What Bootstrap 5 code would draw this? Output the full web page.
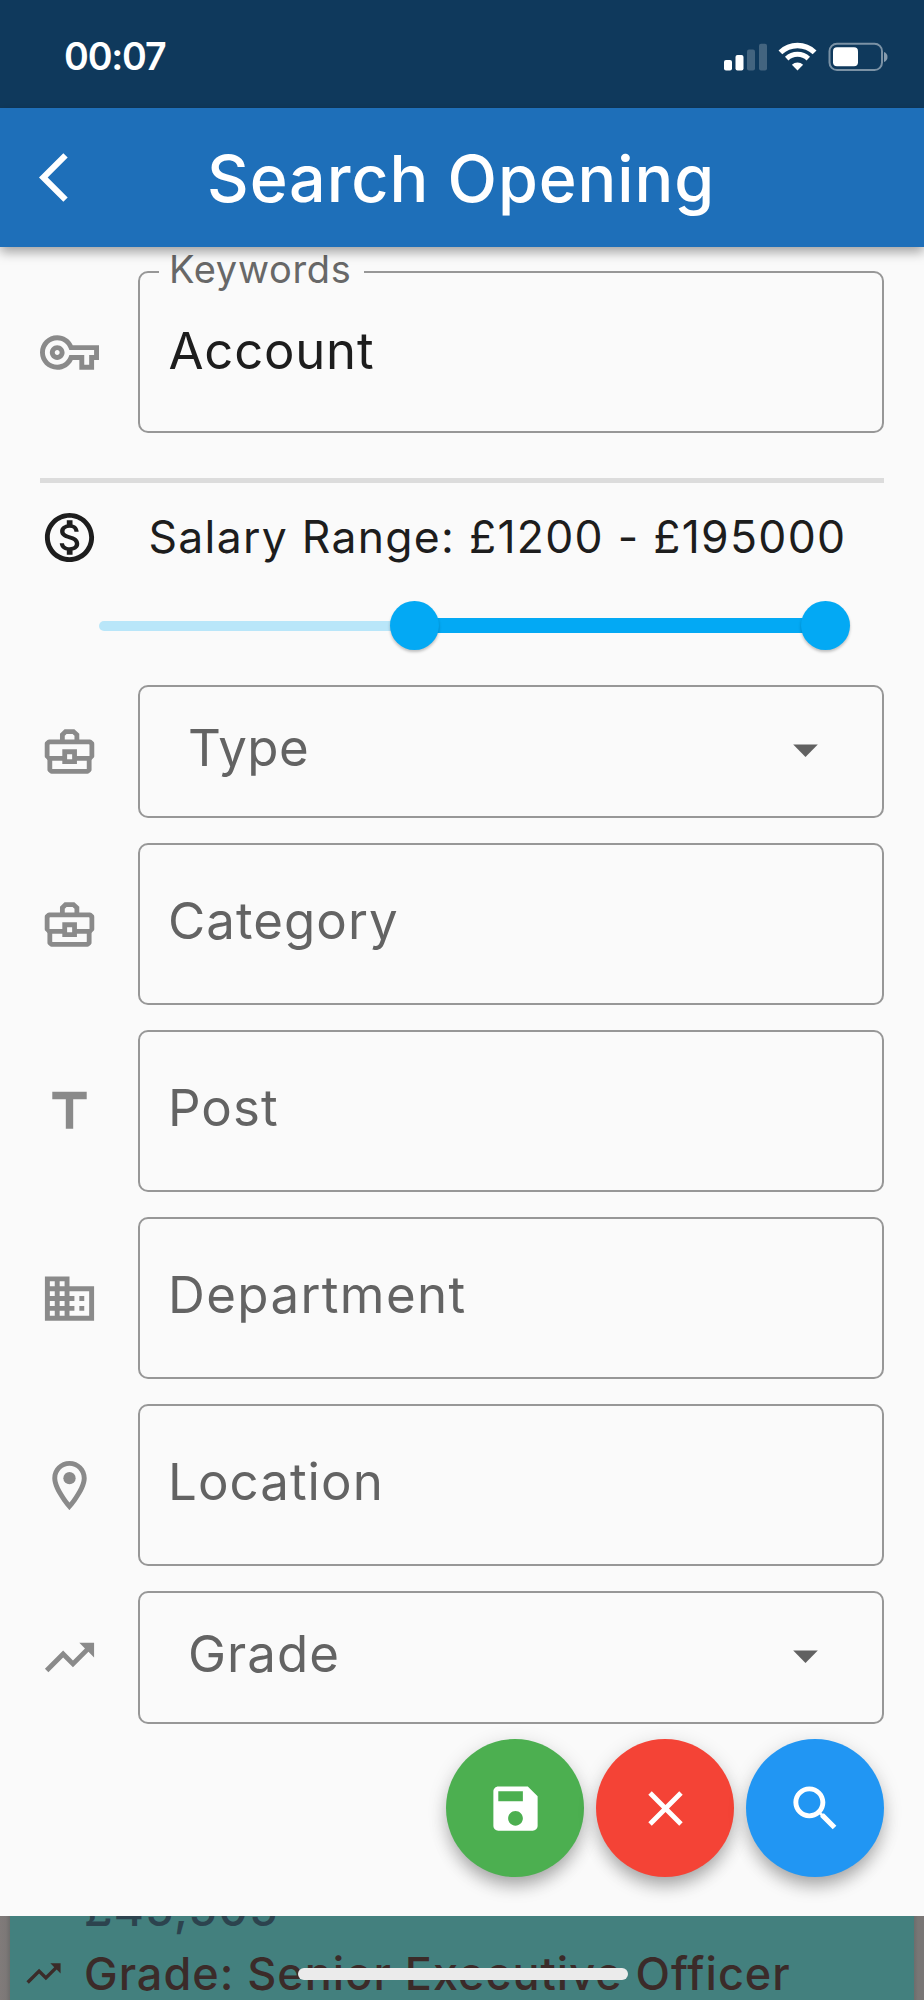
<!DOCTYPE html>
<html lang="en">
<head>
<meta charset="utf-8">
<meta name="viewport" content="width=device-width, initial-scale=1">
<title>Search Opening</title>
<link href="https://cdn.jsdelivr.net/npm/bootstrap@5.3.0/dist/css/bootstrap.min.css" rel="stylesheet">
<style>
  html, body { height: 2000px; overflow: hidden; }
  body { font-family: Inter, "Liberation Sans", sans-serif; background: #7b7776; color: #1d1d1d; line-height: 1.2; }
  svg { display: block; flex: none; }
  .ico { width: 59px; height: 59px; fill: #8a8a8a; }

  .status-bar { height: 108px; background: #0f395c; padding: 6px 35px 0 64px; }
  .clock { font-size: 37.6px; font-weight: 600; letter-spacing: -1.15px; }
  .app-bar { height: 138.5px; background: #1e6fb9; box-shadow: 0 5px 11px rgba(0,0,0,.36); padding-left: 39px; z-index: 2; }
  .app-bar h1 { font-size: 64.5px; font-weight: 500; letter-spacing: .96px; margin: 4px 0 0 109px; white-space: nowrap; line-height: 78px; }

  .sheet { background: #fafafa; height: 1669px; padding: 24.5px 40px 0 39.5px; }
  .field { gap: 39.5px; margin-bottom: 25px; }
  .box { height: 162px; border: 2px solid #979797; border-radius: 10px; padding: 0 29px 7px 28px; font-size: 51px; letter-spacing: 1.05px; color: #636363; }
  .box.pick { height: 133px; padding-left: 48px; padding-right: 47px; }
  .box.filled { color: #1d1d1d; font-size: 50.8px; letter-spacing: .8px; padding: 0 29px 1px 28.5px; }
  .box .ico { fill: #616161; margin-top: 3px; }
  .ls-tight { letter-spacing: .45px; }
  .ls-wide { letter-spacing: 1.38px; }
  .float-label { left: 19px; top: -27px; height: 46px; line-height: 46px; padding: 0 12px 0 10px; width: 205px; background: #fafafa; font-size: 38px; letter-spacing: .7px; color: #686868; }

  .rule { height: 5px; background: #dcdcdc; margin-top: 45px; }
  .salary { height: 108px; gap: 50px; font-size: 44.5px; letter-spacing: 1.28px; white-space: nowrap; }
  .salary span { padding-top: 2px; }
  .salary .ico { fill: #1d1d1d; }
  .slider { height: 69px; margin: 0 35px 25px 59px; }
  .track { height: 10px; background: #b9e6f9; border-radius: 5px 0 0 5px; width: 316px; }
  .track-on { height: 14.5px; background: #03a9f4; width: 410.5px; }
  .thumb { width: 49px; height: 49px; border-radius: 50%; background: #03a9f4; box-shadow: 0 2px 3px rgba(0,0,0,.24); margin: 0 -24.5px; z-index: 1; flex: none; }

  .fabs { gap: 12.1px; margin: -10px -.4px 0 0; }
  .fab { width: 138px; height: 138px; border: 0; border-radius: 50%; box-shadow: 0 12px 18px -4px rgba(0,0,0,.28), 0 4px 20px rgba(0,0,0,.14); }
  .fab .ico { fill: #fff; }
  .fab-save { background: #4caf50; }
  .fab-clear { background: #f44336; }
  .fab-find { background: #2196f3; }

  .behind { height: 84.5px; padding: 0 10px; background: linear-gradient(90deg, #807b7a 0, #7c7877 6px, #6d6d6c 10px, #6d6d6c 914px, #787675 918px, #797675 100%); }
  .result { background: #43807e; height: 100%; padding-left: 13px; color: #3b2b29; }
  .pay { height: 20px; padding-left: 61px; font-size: 46px; font-weight: 500; letter-spacing: 1.3px; color: #2c434e; }
  .pay span { line-height: 54px; }
  .grade { gap: 20px; font-size: 45px; font-weight: 500; letter-spacing: 1px; line-height: 54px; margin-top: 11px; white-space: nowrap; }
  .grade svg { width: 41px; height: 41px; fill: #3b2b29; }
  .home-bar { left: 297.5px; bottom: 20px; width: 330px; height: 12.5px; border-radius: 7px; background: #ebebeb; }
</style>
<script src="https://cdn.jsdelivr.net/npm/bootstrap@5.3.0/dist/js/bootstrap.bundle.min.js"></script>
</head>
<body>
<svg width="0" height="0" class="position-absolute" aria-hidden="true">
  <symbol id="i-case" viewBox="0 0 24 24">
    <g fill="none" stroke="#8a8a8a" stroke-width="1.95">
      <path d="M9.1 8V5.2l1.3-1.3h3.2l1.4 1.3V8"/>
      <path d="M10 14.8H3.8l-.9-.9V8.8l.8-.7h16.6l.8.7v5.1l-.9.9H14" stroke-linejoin="round"/>
      <path d="M4 15v4.4l.7.7h14.6l.7-.7V15" stroke-linejoin="round"/>
      <path d="M10.05 12.1h4v4h-4z"/>
    </g>
  </symbol>
  <symbol id="i-trend" viewBox="0 0 24 24"><path d="M16 6l2.29 2.29-4.88 4.88-4-4L2 16.59 3.41 18l6-6 4 4 6.3-6.29L22 12V6z"/></symbol>
  <symbol id="i-drop" viewBox="0 0 24 24"><path d="M7 10l5 5 5-5z"/></symbol>
</svg>

<div class="status-bar d-flex justify-content-between align-items-center text-white">
  <span class="clock">00:07</span>
  <svg width="167" height="32" viewBox="0 0 167 32" fill="#fff">
    <rect x="2" y="19" width="8" height="10.5" rx="2"/>
    <rect x="13.5" y="14" width="8" height="15.5" rx="2"/>
    <rect x="25" y="8.5" width="8" height="21" rx="2" opacity=".22"/>
    <rect x="37" y="2.7" width="8" height="26.8" rx="2" opacity=".22"/>
    <g fill="none" stroke="#fff">
      <path d="M58.400 11.400a24.600 24.600 0 0 1 34.200 0" stroke-width="5.4"/>
      <path d="M64.700 17.600a15.800 15.800 0 0 1 21.600 0" stroke-width="5"/>
    </g>
    <path d="M75.500 29.500l-5.600-5.800a8.400 8.400 0 0 1 11.200 0z"/>
    <rect x="107.500" y="2.700" width="52.500" height="26.400" rx="7.500" fill="none" stroke="#fff" stroke-width="2" opacity=".45"/>
    <rect x="111" y="6.300" width="25" height="19" rx="4"/>
    <path d="M162 11c2.400.8 3.500 2.600 3.500 5s-1.100 4.200-3.500 5z" opacity=".5"/>
  </svg>
</div>

<header class="app-bar d-flex align-items-center text-white position-relative">
  <svg width="59" height="59" viewBox="0 0 24 24" fill="#fff"><path d="M11.670 3.870L9.900 2.100 0 12l9.900 9.900 1.770-1.770L3.540 12z"/></svg>
  <h1>Search Opening</h1>
</header>

<main class="sheet">
  <div class="field d-flex align-items-center mb-0">
    <svg class="ico" viewBox="0 0 24 24"><path d="M22 19h-6v-4h-2.680c-1.140 2.420-3.600 4-6.320 4-3.860 0-7-3.140-7-7s3.140-7 7-7c2.720 0 5.170 1.580 6.320 4H24v6h-2v4zm-4-2h2v-4h2v-2H11.940l-.23-.67C11.010 8.340 9.110 7 7 7c-2.760 0-5 2.240-5 5s2.240 5 5 5c2.110 0 4.010-1.340 4.710-3.330l.23-.67H18v4zM7 15c-1.650 0-3-1.350-3-3s1.350-3 3-3 3 1.350 3 3-1.350 3-3 3zm0-4c-.55 0-1 .45-1 1s.45 1 1 1 1-.45 1-1-.45-1-1-1z"/></svg>
    <div class="box filled flex-grow-1 d-flex align-items-center position-relative">
      <label class="float-label position-absolute">Keywords</label>
      <span>Account</span>
    </div>
  </div>

  <div class="rule"></div>
  <div class="salary d-flex align-items-center">
    <svg class="ico" viewBox="0 0 24 24"><path d="M12 2C6.480 2 2 6.480 2 12s4.480 10 10 10 10-4.480 10-10S17.520 2 12 2zm0 18c-4.410 0-8-3.590-8-8s3.590-8 8-8 8 3.590 8 8-3.590 8-8 8zm.31-8.860c-1.770-.45-2.340-.94-2.340-1.670 0-.84.79-1.430 2.100-1.430 1.380 0 1.900.66 1.940 1.640h1.710c-.05-1.340-.87-2.570-2.490-2.970V5H10.900v1.690c-1.510.32-2.720 1.300-2.720 2.810 0 1.790 1.490 2.690 3.660 3.210 1.950.46 2.340 1.150 2.340 1.870 0 .53-.39 1.390-2.100 1.390-1.600 0-2.230-.72-2.320-1.640H8.040c.1 1.700 1.360 2.660 2.860 2.970V19h2.340v-1.670c1.520-.29 2.720-1.160 2.730-2.770-.01-2.200-1.900-2.960-3.660-3.420z"/></svg>
    <span>Salary Range: £1200 - £195000</span>
  </div>
  <div class="slider d-flex align-items-center">
    <div class="track"></div>
    <div class="thumb"></div>
    <div class="track-on"></div>
    <div class="thumb"></div>
  </div>

  <div class="field d-flex align-items-center">
    <svg class="ico"><use href="#i-case"/></svg>
    <div class="box pick flex-grow-1 d-flex align-items-center justify-content-between"><span class="ls-tight">Type</span><svg class="ico"><use href="#i-drop"/></svg></div>
  </div>
  <div class="field d-flex align-items-center">
    <svg class="ico"><use href="#i-case"/></svg>
    <div class="box flex-grow-1 d-flex align-items-center">Category</div>
  </div>
  <div class="field d-flex align-items-center">
    <svg class="ico" viewBox="0 0 24 24"><path d="M5 4v3h5.500v12h3V7H19V4z"/></svg>
    <div class="box flex-grow-1 d-flex align-items-center">Post</div>
  </div>
  <div class="field d-flex align-items-center">
    <svg class="ico" viewBox="0 0 24 24"><path d="M12 7V3H2v18h20V7H12zM6 19H4v-2h2v2zm0-4H4v-2h2v2zm0-4H4V9h2v2zm0-4H4V5h2v2zm4 12H8v-2h2v2zm0-4H8v-2h2v2zm0-4H8V9h2v2zm0-4H8V5h2v2zm10 12h-8v-2h2v-2h-2v-2h2v-2h-2V9h8v10zm-2-8h-2v2h2v-2zm0 4h-2v2h2v-2z"/></svg>
    <div class="box flex-grow-1 d-flex align-items-center"><span class="ls-wide">Department</span></div>
  </div>
  <div class="field d-flex align-items-center">
    <svg class="ico" viewBox="0 0 24 24"><path d="M12 2C8.130 2 5 5.130 5 9c0 5.250 7 13 7 13s7-7.750 7-13c0-3.870-3.130-7-7-7zM7 9c0-2.760 2.240-5 5-5s5 2.240 5 5c0 2.880-2.880 7.190-5 9.880C9.920 16.210 7 11.850 7 9z"/><circle cx="12" cy="9" r="2.500"/></svg>
    <div class="box flex-grow-1 d-flex align-items-center">Location</div>
  </div>
  <div class="field d-flex align-items-center">
    <svg class="ico"><use href="#i-trend"/></svg>
    <div class="box pick flex-grow-1 d-flex align-items-center justify-content-between"><span>Grade</span><svg class="ico"><use href="#i-drop"/></svg></div>
  </div>

  <div class="fabs d-flex justify-content-end">
    <button class="fab fab-save p-0 d-flex align-items-center justify-content-center" aria-label="Save"><svg class="ico" viewBox="0 0 24 24"><path d="M17 3H5c-1.110 0-2 .9-2 2v14c0 1.100.89 2 2 2h14c1.100 0 2-.9 2-2V7l-4-4zm-5 16c-1.660 0-3-1.340-3-3s1.340-3 3-3 3 1.340 3 3-1.340 3-3 3zm3-10H5V5h10v4z"/></svg></button>
    <button class="fab fab-clear p-0 d-flex align-items-center justify-content-center" aria-label="Clear"><svg class="ico" viewBox="0 0 24 24"><path d="M19 6.410L17.590 5 12 10.590 6.410 5 5 6.410 10.590 12 5 17.590 6.410 19 12 13.410 17.590 19 19 17.590 13.410 12z"/></svg></button>
    <button class="fab fab-find p-0 d-flex align-items-center justify-content-center" aria-label="Search"><svg class="ico" viewBox="0 0 24 24"><path d="M15.500 14h-.79l-.28-.27C15.410 12.590 16 11.110 16 9.500 16 5.910 13.090 3 9.500 3S3 5.910 3 9.500 5.910 16 9.500 16c1.610 0 3.090-.59 4.230-1.570l.27.28v.79l5 4.990L20.490 19l-4.990-5zm-6 0C7.010 14 5 11.990 5 9.500S7.010 5 9.500 5 14 7.010 14 9.500 11.990 14 9.500 14z"/></svg></button>
  </div>
</main>

<section class="behind position-relative">
  <div class="result">
    <div class="overflow-hidden"><div class="pay d-flex align-items-end"><span>£45,505</span></div></div>
    <div class="grade d-flex align-items-center"><svg><use href="#i-trend"/></svg><span>Grade: Senior Executive Officer</span></div>
  </div>
  <div class="home-bar position-absolute"></div>
</section>
</body>
</html>
